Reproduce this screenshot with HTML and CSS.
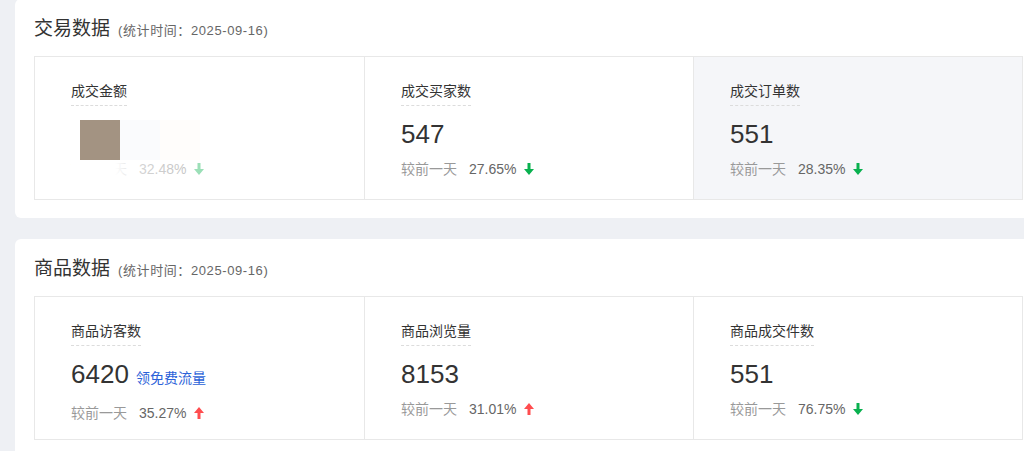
FILE: index.html
```html
<!DOCTYPE html>
<html lang="zh-CN">
<head>
    <meta charset="UTF-8">
    <title>数据概览</title>
    <link rel="stylesheet" href="styles.css">
</head>
<body>

<!-- 交易数据 -->
<section class="panel panel-first">
    <div class="panel-head">
        <h2 class="panel-title">交易数据</h2>
        <span class="panel-sub">(统计时间：2025-09-16)</span>
    </div>
    <div class="stat-grid">
        <div class="stat-cell">
            <div class="stat-label">成交金额</div>
            <div class="stat-value">&nbsp;</div>
            <div class="stat-change">
                <span class="change-text">较前一天</span>
                <span class="change-num">32.48%</span>
                <svg class="arrow down" viewBox="0 0 10 12"><path d="M3.5 0h3v6H10L5 12 0 6h3.5z"/></svg>
            </div>
            <div class="mask-block">
                <span class="mask-a"></span><span class="mask-b"></span><span class="mask-c"></span>
            </div>
            <div class="mask-fade"></div>
        </div>
        <div class="stat-cell">
            <div class="stat-label">成交买家数</div>
            <div class="stat-value">547</div>
            <div class="stat-change">
                <span class="change-text">较前一天</span>
                <span class="change-num">27.65%</span>
                <svg class="arrow down" viewBox="0 0 10 12"><path d="M3.5 0h3v6H10L5 12 0 6h3.5z"/></svg>
            </div>
        </div>
        <div class="stat-cell active">
            <div class="stat-label">成交订单数</div>
            <div class="stat-value">551</div>
            <div class="stat-change">
                <span class="change-text">较前一天</span>
                <span class="change-num">28.35%</span>
                <svg class="arrow down" viewBox="0 0 10 12"><path d="M3.5 0h3v6H10L5 12 0 6h3.5z"/></svg>
            </div>
        </div>
    </div>
</section>

<!-- 商品数据 -->
<section class="panel">
    <div class="panel-head">
        <h2 class="panel-title">商品数据</h2>
        <span class="panel-sub">(统计时间：2025-09-16)</span>
    </div>
    <div class="stat-grid">
        <div class="stat-cell">
            <div class="stat-label">商品访客数</div>
            <div class="stat-value">6420 <a class="stat-link" href="#">领免费流量</a></div>
            <div class="stat-change">
                <span class="change-text">较前一天</span>
                <span class="change-num">35.27%</span>
                <svg class="arrow up" viewBox="0 0 10 12"><path d="M3.5 12h3V6H10L5 0 0 6h3.5z"/></svg>
            </div>
        </div>
        <div class="stat-cell">
            <div class="stat-label">商品浏览量</div>
            <div class="stat-value">8153</div>
            <div class="stat-change">
                <span class="change-text">较前一天</span>
                <span class="change-num">31.01%</span>
                <svg class="arrow up" viewBox="0 0 10 12"><path d="M3.5 12h3V6H10L5 0 0 6h3.5z"/></svg>
            </div>
        </div>
        <div class="stat-cell">
            <div class="stat-label">商品成交件数</div>
            <div class="stat-value">551</div>
            <div class="stat-change">
                <span class="change-text">较前一天</span>
                <span class="change-num">76.75%</span>
                <svg class="arrow down" viewBox="0 0 10 12"><path d="M3.5 0h3v6H10L5 12 0 6h3.5z"/></svg>
            </div>
        </div>
    </div>
</section>

</body>
</html>
```

FILE: styles.css
```css
body, html {
    margin: 0;
    padding: 0;
    background-color: #eef0f4;
    font-family: "Liberation Sans", "Noto Sans CJK SC", sans-serif;
    color: #333;
    overflow: hidden;
}

/* 白色面板 */
.panel {
    width: 1027px;
    margin: 0 0 21px 15px;
    padding: 0 19px 18px;
    box-sizing: border-box;
    background-color: #fff;
    border-radius: 6px;
}

.panel-first {
    margin-top: -1px;
}

/* 标题 */
.panel-head {
    display: flex;
    align-items: baseline;
    height: 57px;
    padding-top: 18px;
    box-sizing: border-box;
}

.panel-title {
    margin: 0;
    font-size: 19px;
    font-weight: 400;
    line-height: 24px;
    color: #333;
}

.panel-sub {
    margin-left: 8px;
    font-size: 13px;
    letter-spacing: 0.6px;
    color: #666;
}

/* 数据格 */
.stat-grid {
    display: grid;
    grid-template-columns: repeat(3, 1fr);
    border: 1px solid #e8e8e8;
}

.stat-cell {
    position: relative;
    height: 142px;
    padding: 24px 36px 0;
    box-sizing: border-box;
}

.stat-cell + .stat-cell {
    border-left: 1px solid #e8e8e8;
}

.stat-cell.active {
    background-color: #f5f6f9;
}

.stat-label {
    display: inline-block;
    font-size: 14px;
    line-height: 20px;
    padding-bottom: 4px;
    border-bottom: 1px dashed #dcdcdc;
    color: #333;
}

.stat-value {
    margin-top: 12px;
    font-size: 26px;
    line-height: 32px;
    color: #333;
}

.stat-link {
    font-size: 14px;
    color: #2b62d9;
    text-decoration: none;
}

.stat-change {
    display: flex;
    align-items: center;
    margin-top: 9px;
    font-size: 14px;
    line-height: 20px;
}

.change-text {
    color: #999;
}

.change-num {
    margin-left: 12px;
    color: #666;
}

.arrow {
    width: 10px;
    height: 12px;
    margin-left: 8px;
}

.arrow.down {
    fill: #09b14f;
}

.arrow.up {
    fill: #ff4d4f;
}

/* 被遮挡的金额 */
.mask-block {
    position: absolute;
    left: 45px;
    top: 63px;
    display: flex;
}

.mask-block span {
    width: 40px;
    height: 40px;
}

.mask-a { background-color: #a39382; }
.mask-b { background-color: #fafbfd; }
.mask-c { background-color: #fffdfb; }

.mask-fade {
    position: absolute;
    left: 36px;
    top: 103px;
    width: 170px;
    height: 20px;
    background: linear-gradient(to right, #fff 0, #fff 26%, rgba(255,255,255,0.75) 34%, rgba(255,255,255,0.5) 100%);
}
```
